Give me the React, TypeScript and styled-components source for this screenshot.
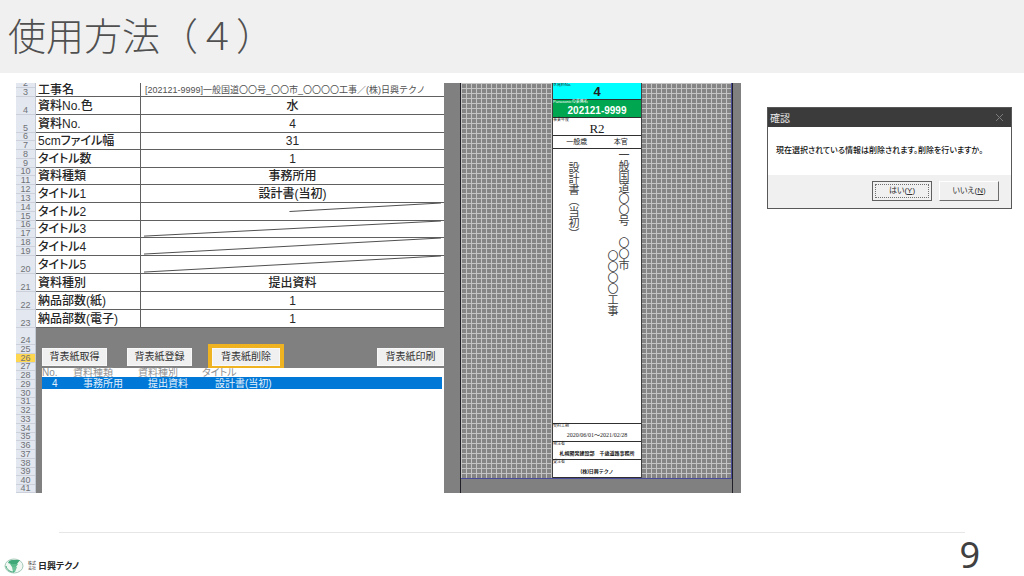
import React from "react";
import styled, { createGlobalStyle } from "styled-components";

const GlobalStyle = createGlobalStyle`
  * { box-sizing: border-box; }
  body {
    margin: 0;
    background: #ffffff;
    color: #262626;
    font-family: "Liberation Sans", "Noto Sans CJK JP", sans-serif;
  }
`;

const Slide = styled.div`
  display: flex;
  flex-direction: column;
  min-height: 100vh;
`;

const Header = styled.header`
  height: 73px;
  padding: 0 8px;
  background: #f0f0f0;
`;

const Title = styled.h1`
  margin: 0;
  color: #505050;
  font-family: "Liberation Serif", "Noto Sans CJK JP", serif;
  font-size: 38px;
  font-weight: 300;
  line-height: 74px;
`;

const Main = styled.main`
  display: grid;
  grid-template-columns: minmax(0, 725fr) minmax(0, 245fr);
  align-items: start;
  gap: 26px;
  padding: 10px 12px 0 16px;
`;

const Sheet = styled.section`
  display: grid;
  grid-template-columns: 20px minmax(0, 408fr) minmax(0, 297fr);
  overflow: hidden;
  background: #808080;
`;

const RowHeads = styled.div`
  border-right: 1px solid #c3c9d3;
  background: #e3e7ef;
`;

const RowHead = styled.div<{ $h: number; $active?: boolean }>`
  display: flex;
  align-items: flex-end;
  justify-content: center;
  height: ${(p) => p.$h}px;
  border-bottom: 1px solid #cbd0da;
  background: ${(p) => (p.$active ? "#ffd64f" : "transparent")};
  color: #6f7278;
  font-size: 9px;
  line-height: 7px;
`;

const Work = styled.div`
  display: flex;
  flex-direction: column;
`;

const Props = styled.table`
  width: 100%;
  border-spacing: 0;
  table-layout: fixed;
  background: #ffffff;
`;

const PropRow = styled.tr<{ $h: number }>`
  height: ${(p) => p.$h}px;
`;

const PropName = styled.th`
  width: 105px;
  padding: 0 2px;
  border-right: 1px solid #606060;
  border-bottom: 1px solid #606060;
  font-feature-settings: "palt";
  font-size: 12px;
  font-weight: 500;
  line-height: 12px;
  text-align: left;
  white-space: nowrap;
`;

const PropValue = styled.td<{ $small?: boolean }>`
  position: relative;
  padding: 0 4px;
  border-bottom: 1px solid #606060;
  color: ${(p) => (p.$small ? "#505050" : "#262626")};
  font-size: ${(p) => (p.$small ? 9 : 12)}px;
  font-weight: ${(p) => (p.$small ? 400 : 500)};
  line-height: 12px;
  text-align: ${(p) => (p.$small ? "left" : "center")};
  white-space: nowrap;
`;

const Slash = styled.svg`
  position: absolute;
  inset: 0;
  width: 100%;
  height: 100%;
  overflow: visible;
`;

const Actions = styled.div`
  display: grid;
  grid-template-columns: 65px 65px 68px 1fr 67px;
  column-gap: 20px;
  padding: 20px 0 2px 6px;

  & > :last-child { grid-column: 5; }
`;

const ActionButton = styled.button<{ $marked?: boolean }>`
  height: 18px;
  padding: 0;
  border: 1px solid #f8f8f8;
  outline: ${(p) => (p.$marked ? "4px solid #efb321" : "none")};
  background: #f0f0f0;
  color: #333333;
  font-family: inherit;
  font-size: 10px;
  line-height: 14px;
  white-space: nowrap;
`;

const ListBox = styled.div`
  flex: 1;
  margin-left: 6px;
  padding-right: 2px;
  background: #ffffff;
`;

const List = styled.table`
  width: 100%;
  border-spacing: 0;
  table-layout: fixed;
  font-size: 10px;
  line-height: 9px;
  text-align: left;
  white-space: nowrap;

  th { height: 9px; padding: 0; color: #909090; font-weight: 400; }
  th:last-child { font-feature-settings: "palt"; }
  td { height: 12px; padding: 0 0 0 10px; background: #0078d7; color: #e4f1fb; }
  td:last-child { padding-left: 13px; }
  th:nth-child(1) { width: 31px; }
  th:nth-child(2) { width: 65px; }
  th:nth-child(3) { width: 64px; }
`;

const Preview = styled.div`
  margin: 0 8px 0 16px;
  border: solid #202028;
  border-width: 0 1px;
`;

const Paper = styled.div`
  display: flex;
  justify-content: center;
  height: 396px;
  padding-left: 2px;
  border: solid #4a4a9a;
  border-width: 0 1px 1px 0;
  background-color: #858585;
  background-image:
    linear-gradient(to right, #c4c4c4 1px, transparent 1px),
    linear-gradient(to bottom, #c4c4c4 1px, transparent 1px);
  background-size: 5px 5px;
`;

const Spine = styled.article`
  display: flex;
  flex-direction: column;
  width: 90px;
  border: solid #404040;
  border-width: 0 1px;
  background: #ffffff;
`;

const Band = styled.div<{ $h: number; $bg?: string; $fg?: string }>`
  height: ${(p) => p.$h}px;
  border-bottom: 1px solid #303030;
  background: ${(p) => p.$bg ?? "#ffffff"};
  color: ${(p) => p.$fg ?? "#202020"};
  text-align: center;
  white-space: nowrap;
`;

const Caption = styled.div`
  height: 4px;
  font-size: 4px;
  line-height: 4px;
  text-align: left;
`;

const BandText = styled.div<{ $size: number; $bold?: boolean; $serif?: boolean; $line?: number }>`
  font-family: ${(p) => (p.$serif ? '"Liberation Serif", "Noto Sans CJK JP", serif' : "inherit")};
  font-size: ${(p) => p.$size}px;
  font-weight: ${(p) => (p.$bold ? 700 : 400)};
  line-height: ${(p) => p.$line ?? 14}px;
`;

const Split = styled(Band)`
  display: flex;
  justify-content: space-around;
  font-size: 7px;
  line-height: 12px;
`;

const SpineBody = styled.div`
  display: flex;
  flex: 1;
  justify-content: space-between;
  padding: 0 12px 0 15px;
  border-bottom: 1px solid #303030;
  color: #404040;
  font-family: "Noto Sans CJK JP", sans-serif;
  font-size: 11px;
  line-height: 11px;
  text-spacing-trim: space-all;
`;

const Vertical = styled.div<{ $top: number }>`
  padding-top: ${(p) => p.$top}px;
  writing-mode: vertical-rl;
  white-space: nowrap;
`;

const ProjectName = styled.div`
  display: flex;
`;

const Dialog = styled.section`
  margin-top: 24px;
  border: 1px solid #585858;
  background: #ffffff;
`;

const DialogBar = styled.div`
  display: flex;
  align-items: center;
  justify-content: space-between;
  height: 19px;
  padding: 0 7px 0 2px;
  background: #3b3b3b;
  color: #e8e8e8;
`;

const DialogTitle = styled.h2`
  margin: 0;
  font-size: 10px;
  font-weight: 400;
`;

const CloseButton = styled.button`
  display: flex;
  padding: 0;
  border: 0;
  background: none;
  color: #7d7d7d;
`;

const Message = styled.p`
  margin: 0;
  padding: 18px 8px;
  color: #101010;
  font-feature-settings: "palt";
  font-size: 8px;
  font-weight: 500;
  line-height: 12px;
  white-space: nowrap;
`;

const DialogActions = styled.div`
  display: flex;
  justify-content: flex-end;
  gap: 7px;
  padding: 6px 12px 7px;
  background: #f0f0f0;
`;

const DialogButton = styled.button<{ $focused?: boolean }>`
  width: 60px;
  height: 20px;
  padding: 0;
  border: 1px solid;
  border-color: ${(p) => (p.$focused ? "#606060" : "#ffffff #6c6c6c #6c6c6c #ffffff")};
  outline: ${(p) => (p.$focused ? "1px dotted #707070" : "none")};
  outline-offset: -4px;
  background: #f0f0f0;
  color: #303030;
  font-family: inherit;
  font-feature-settings: "palt";
  font-size: 8px;
  line-height: 14px;
`;

const Footer = styled.footer`
  margin-top: 39px;
`;

const Rule = styled.hr`
  margin: 0 59px;
  border: 0;
  border-top: 1px solid #e6e6e6;
`;

const FooterRow = styled.div`
  display: flex;
  align-items: flex-start;
  justify-content: space-between;
  padding: 0 44px 0 4px;
`;

const Brand = styled.div`
  display: flex;
  align-items: center;
  gap: 4px;
  padding-top: 25px;
`;

const Company = styled.span`
  font-size: 4px;
  line-height: 5px;
`;

const BrandName = styled.strong`
  margin-left: -2px;
  font-feature-settings: "palt";
  font-size: 9px;
  line-height: 12px;
`;

const PageNumber = styled.span`
  color: #404040;
  font-family: "Noto Sans", sans-serif;
  font-size: 36px;
  line-height: 43px;
`;

const rowHeads: [string, number][] = [
  ["2", 5], ["3", 9], ["4", 18], ["5", 18], ["6", 8], ["7", 9], ["8", 9], ["9", 9],
  ["10", 8], ["11", 9], ["12", 9], ["13", 9], ["14", 9], ["15", 9], ["16", 8], ["17", 9],
  ["18", 9], ["19", 9], ["20", 18], ["21", 18], ["22", 18], ["23", 18], ["24", 17],
  ["25", 9], ["26", 9], ["27", 8], ["28", 9], ["29", 9], ["30", 9], ["31", 8], ["32", 9],
  ["33", 9], ["34", 9], ["35", 8], ["36", 9], ["37", 9], ["38", 9], ["39", 8], ["40", 9], ["41", 8],
];

type Prop = { name: string; value?: string; h: number; small?: boolean; from?: number };

const props: Prop[] = [
  { name: "工事名", value: "[202121-9999]一般国道〇〇号_〇〇市_〇〇〇〇工事／(株)日興テクノ", h: 14, small: true },
  { name: "資料No.色", value: "水", h: 18 },
  { name: "資料No.", value: "4", h: 18 },
  { name: "5cmファイル幅", value: "31", h: 17 },
  { name: "タイトル数", value: "1", h: 18 },
  { name: "資料種類", value: "事務所用", h: 17 },
  { name: "タイトル1", value: "設計書(当初)", h: 18 },
  { name: "タイトル2", h: 18, from: 49 },
  { name: "タイトル3", h: 17, from: 1 },
  { name: "タイトル4", h: 18, from: 1 },
  { name: "タイトル5", h: 18, from: 1 },
  { name: "資料種別", value: "提出資料", h: 18 },
  { name: "納品部数(紙)", value: "1", h: 18 },
  { name: "納品部数(電子)", value: "1", h: 18 },
];

const Logo = () => (
  <svg width="20" height="16" viewBox="0 0 20 16" aria-hidden="true">
    <ellipse cx="10" cy="8" rx="9" ry="7" fill="#f1f8f4" stroke="#a3c9b7" strokeWidth="1" />
    <path d="M4 5Q5 2 8 2h8l-3 4H7z" fill="#3fa878" />
    <path d="M6 6h8l-2 3H8z" fill="#5cbb8d" />
    <path d="M8 9h5l-2 5H9z" fill="#6cc299" />
    <path d="M2 8c1 4 4 6 8 6" fill="none" stroke="#3da575" strokeWidth="1" />
  </svg>
);

export default function App() {
  return (
    <Slide>
      <GlobalStyle />
      <Header>
        <Title>使用方法（４）</Title>
      </Header>

      <Main>
        <Sheet>
          <RowHeads>
            {rowHeads.map(([label, h]) => (
              <RowHead key={label} $h={h} $active={label === "26"}>{label}</RowHead>
            ))}
          </RowHeads>

          <Work>
            <Props>
              <tbody>
                {props.map((p) => (
                  <PropRow key={p.name} $h={p.h}>
                    <PropName scope="row">{p.name}</PropName>
                    <PropValue $small={p.small}>
                      {p.value}
                      {p.from !== undefined && (
                        <Slash viewBox="0 0 100 18" preserveAspectRatio="none">
                          <line
                            x1={p.from} y1={p.from > 1 ? 9 : 17} x2="99" y2="0"
                            stroke="#505050" strokeWidth="1" vectorEffect="non-scaling-stroke"
                          />
                        </Slash>
                      )}
                    </PropValue>
                  </PropRow>
                ))}
              </tbody>
            </Props>

            <Actions>
              <ActionButton type="button">背表紙取得</ActionButton>
              <ActionButton type="button">背表紙登録</ActionButton>
              <ActionButton type="button" $marked>背表紙削除</ActionButton>
              <ActionButton type="button">背表紙印刷</ActionButton>
            </Actions>

            <ListBox>
              <List>
                <thead>
                  <tr><th>No.</th><th>資料種類</th><th>資料種別</th><th>タイトル</th></tr>
                </thead>
                <tbody>
                  <tr><td>4</td><td>事務所用</td><td>提出資料</td><td>設計書(当初)</td></tr>
                </tbody>
              </List>
            </ListBox>
          </Work>

          <Preview>
            <Paper>
              <Spine>
                <Band $h={17} $bg="#00ffff">
                  <Caption>水資料No.</Caption>
                  <BandText $size={13} $bold $line={10}>4</BandText>
                </Band>
                <Band $h={18} $bg="#00a650" $fg="#ffffff">
                  <Caption>Panasonicの業務名</Caption>
                  <BandText $size={10} $bold>202121-9999</BandText>
                </Band>
                <Band $h={18}>
                  <Caption>事業年度</Caption>
                  <BandText $size={13} $serif>R2</BandText>
                </Band>
                <Split $h={13}>
                  <span>一般歳</span>
                  <span>本官</span>
                </Split>
                <SpineBody>
                  <Vertical $top={13}>設計書（当初）</Vertical>
                  <ProjectName>
                    <Vertical $top={101}>〇〇〇〇工事</Vertical>
                    <Vertical $top={0}>一般国道〇〇号　〇〇市</Vertical>
                  </ProjectName>
                </SpineBody>
                <Band $h={18}>
                  <Caption>契約工期</Caption>
                  <BandText $size={6} $serif>2020/06/01～2021/02/28</BandText>
                </Band>
                <Band $h={18}>
                  <Caption>発注者</Caption>
                  <BandText $size={5} $bold>札幌開発建設部　千歳道路事務所</BandText>
                </Band>
                <Band $h={18}>
                  <Caption>受注者</Caption>
                  <BandText $size={5} $bold>(株)日興テクノ</BandText>
                </Band>
              </Spine>
            </Paper>
          </Preview>
        </Sheet>

        <Dialog role="dialog" aria-labelledby="confirm-title">
          <DialogBar>
            <DialogTitle id="confirm-title">確認</DialogTitle>
            <CloseButton type="button" aria-label="閉じる">
              <svg width="9" height="9" viewBox="0 0 9 9" stroke="currentColor" fill="none">
                <path d="M1 1l7 7M8 1l-7 7" />
              </svg>
            </CloseButton>
          </DialogBar>
          <Message>現在選択されている情報は削除されます。削除を行いますか。</Message>
          <DialogActions>
            <DialogButton type="button" $focused>はい(<u>Y</u>)</DialogButton>
            <DialogButton type="button">いいえ(<u>N</u>)</DialogButton>
          </DialogActions>
        </Dialog>
      </Main>

      <Footer>
        <Rule />
        <FooterRow>
          <Brand>
            <Logo />
            <Company>株式<br />会社</Company>
            <BrandName>日興テクノ</BrandName>
          </Brand>
          <PageNumber>9</PageNumber>
        </FooterRow>
      </Footer>
    </Slide>
  );
}
